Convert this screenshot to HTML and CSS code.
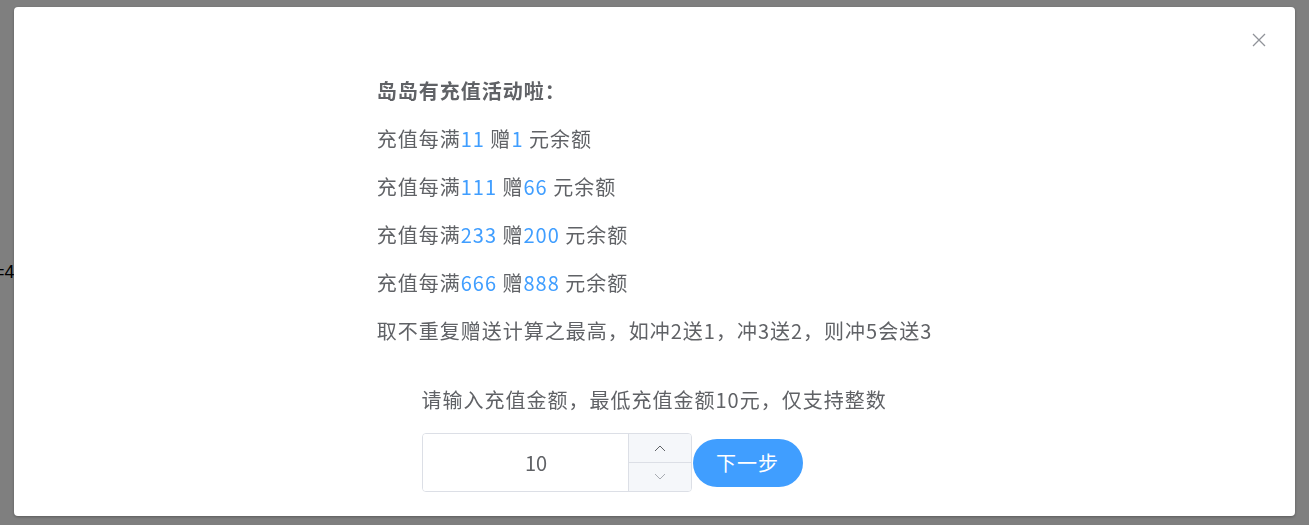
FILE: index.html
```html
<!DOCTYPE html>
<html>
<head>
	<meta charset="utf-8">
	<title>充值</title>
	<link rel="stylesheet" href="styles.css">
</head>
<body>

	<div class="page">
		<div class="page-text">=4</div>
	</div>

	<div class="overlay">
		<div class="dialog">
			<button class="dialog-close" type="button" aria-label="关闭">
				<svg width="14" height="14" viewBox="0 0 14 14">
					<path d="M1 1 L13 13 M13 1 L1 13" stroke="#909399" stroke-width="1.3" fill="none"/>
				</svg>
			</button>

			<div class="dialog-body">
				<div class="promo">
					<div class="promo-title">岛岛有充值活动啦：</div>
					<div class="promo-line">充值每满<span class="num">11</span> 赠<span class="num">1</span> 元余额</div>
					<div class="promo-line">充值每满<span class="num">111</span> 赠<span class="num">66</span> 元余额</div>
					<div class="promo-line">充值每满<span class="num">233</span> 赠<span class="num">200</span> 元余额</div>
					<div class="promo-line">充值每满<span class="num">666</span> 赠<span class="num">888</span> 元余额</div>
					<div class="promo-line">取不重复赠送计算之最高，如冲2送1，冲3送2，则冲5会送3</div>
				</div>

				<div class="recharge">
					<div class="recharge-label">请输入充值金额，最低充值金额10元，仅支持整数</div>
					<div class="recharge-row">
						<div class="input-number">
							<input class="input-number-inner" type="text" value="10">
							<div class="input-number-controls">
								<span class="input-number-btn">
									<svg width="12" height="8" viewBox="0 0 12 8"><path d="M1 7 L6 2 L11 7" stroke="#606266" stroke-width="1" fill="none"/></svg>
								</span>
								<span class="input-number-btn">
									<svg width="12" height="8" viewBox="0 0 12 8"><path d="M1 1 L6 6 L11 1" stroke="#a8abb2" stroke-width="1" fill="none"/></svg>
								</span>
							</div>
						</div>
						<button class="btn-next" type="button">下一步</button>
					</div>
				</div>
			</div>
		</div>
	</div>

</body>
</html>
```

FILE: styles.css
```css
body {
	margin: 0;
	font-family: "Liberation Sans", Arial, sans-serif;
	background: #fff;
}
.page {
	padding-top: 262px;
	margin-left: -6px;
}
.page-text {
	font-size: 18px;
	color: #000;
}

.overlay {
	position: fixed;
	top: 0;
	left: 0;
	right: 0;
	bottom: 0;
	background: rgba(0, 0, 0, .5);
}

.dialog {
	position: relative;
	margin: 7px 14px 0;
	background: #fff;
	border-radius: 4px;
	box-shadow: 0 1px 3px rgba(0, 0, 0, .3);
	font-family: "Noto Sans CJK SC", "Noto Sans", sans-serif;
	color: #606266;
}
.dialog-close {
	position: absolute;
	top: 26px;
	right: 29px;
	width: 14px;
	height: 14px;
	padding: 0;
	border: 0;
	background: none;
	cursor: pointer;
}
.dialog-close svg { display: block; }

.dialog-body {
	padding: 60px 0 24px;
	text-align: center;
}

.promo,
.recharge {
	display: inline-block;
	text-align: left;
	vertical-align: top;
}
.promo {
	font-size: 20px;
	letter-spacing: 1px;
}
.promo-title,
.promo-line {
	line-height: 48px;
	white-space: nowrap;
}
.promo-title {
	font-weight: bold;
}
.num {
	color: #409eff;
}

.recharge {
	display: block;
	width: 466px;
	margin: 30px auto 0;
}
.recharge-label {
	font-size: 20px;
	letter-spacing: 1px;
	line-height: 30px;
	white-space: nowrap;
}
.recharge-row {
	display: flex;
	align-items: center;
	margin-top: 18px;
}

.input-number {
	display: flex;
	width: 270px;
	height: 59px;
	box-sizing: border-box;
	border: 1px solid #dcdfe6;
	border-radius: 4px;
	overflow: hidden;
}
.input-number-inner {
	flex: 1;
	min-width: 0;
	border: 0;
	outline: 0;
	padding: 0 0 0 22px;
	font-family: "Noto Sans CJK SC", "Noto Sans", sans-serif;
	font-size: 20px;
	color: #606266;
	text-align: center;
	background: #fff;
}
.input-number-controls {
	display: flex;
	flex-direction: column;
	width: 62px;
	border-left: 1px solid #dcdfe6;
	background: #f5f7fa;
}
.input-number-btn {
	flex: 1;
	display: flex;
	align-items: center;
	justify-content: center;
}
.input-number-btn + .input-number-btn {
	border-top: 1px solid #dcdfe6;
}
.input-number-btn svg { display: block; }

.btn-next {
	width: 110px;
	height: 48px;
	margin-left: 1px;
	border: 0;
	border-radius: 24px;
	background: #409eff;
	color: #fff;
	font-family: "Noto Sans CJK SC", "Noto Sans", sans-serif;
	font-size: 20px;
	letter-spacing: 1px;
	cursor: pointer;
}
```
